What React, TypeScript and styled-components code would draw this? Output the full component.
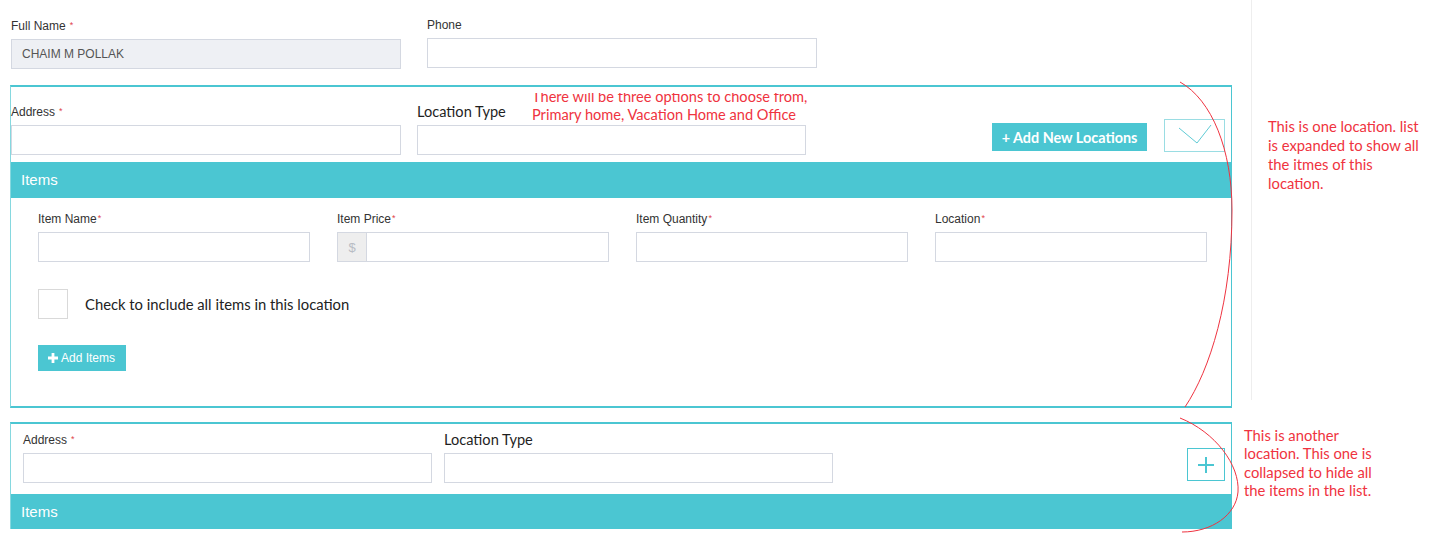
import React from "react";
import styled, { createGlobalStyle } from "styled-components";

const TEAL = "#4bc6d2";
const RED = "#ef3340";
const HUMANIST = `Lato, "Open Sans", "Liberation Sans", sans-serif`;

const GlobalStyle = createGlobalStyle`
  html, body { margin: 0; padding: 0; background: #ffffff; }
  body { font-family: "Liberation Sans", Arial, sans-serif; color: #333333; }
  * { box-sizing: border-box; }
`;

const Page = styled.div`
  position: relative;
  width: 1430px;
  height: 543px;
  overflow: hidden;
  padding-left: 10px;
`;

const UpperSection = styled.div`
  display: flex;
  align-items: flex-start;
`;

const LowerSection = styled.div`
  display: flex;
  align-items: flex-start;
  margin-top: 14px;
`;

const MainColumn = styled.div`
  width: 1222px;
  display: flex;
  flex-direction: column;
`;

const TopRow = styled.div`
  display: flex;
  gap: 26px;
  padding: 18px 0 0 1px;
`;

const Field = styled.div<{ $w: number }>`
  position: relative;
  width: ${(p) => p.$w}px;
  display: flex;
  flex-direction: column;
`;

const Label = styled.label`
  font-size: 12px;
  line-height: 14px;
  color: #333333;
  margin-bottom: 6px;
  white-space: nowrap;
`;

const HumanistLabel = styled.label`
  font-family: ${HUMANIST};
  font-size: 14.6px;
  line-height: 17px;
  color: #1f1f1f;
  margin-bottom: 5px;
  white-space: nowrap;
`;

const Req = styled.span<{ $tight?: boolean }>`
  color: #e0434c;
  font-size: 9px;
  margin-left: ${(p) => (p.$tight ? 1 : 4)}px;
  vertical-align: 2px;
`;

const TextInput = styled.input<{ $filled?: boolean }>`
  width: 100%;
  height: 30px;
  border: 1px solid #d4d8e1;
  background: ${(p) => (p.$filled ? "#eef0f4" : "#ffffff")};
  padding: 0 10px;
  font-family: "Liberation Sans", Arial, sans-serif;
  font-size: 12px;
  color: #555555;
  outline: none;
`;

const InputGroup = styled.div`
  display: flex;
  height: 30px;
`;

const Addon = styled.span`
  width: 29px;
  flex: none;
  display: flex;
  align-items: center;
  justify-content: center;
  background: #eeeeee;
  border: 1px solid #d4d8e1;
  border-right: none;
  color: #b8bcc4;
  font-size: 13px;
`;

const LocationCard = styled.section<{ $expanded: boolean; $gapTop: number }>`
  margin-top: ${(p) => p.$gapTop}px;
  width: 1222px;
  border-top: 2px solid ${TEAL};
  border-left: 1px solid #86d8df;
  border-right: 1px solid ${TEAL};
  border-bottom: ${(p) => (p.$expanded ? `2px solid ${TEAL}` : "none")};
`;

const CardHeader = styled.div<{ $pad: string; $gap: number }>`
  display: flex;
  align-items: flex-end;
  gap: ${(p) => p.$gap}px;
  padding: ${(p) => p.$pad};
`;

const Tools = styled.div`
  margin-left: auto;
  display: flex;
  align-items: flex-end;
  gap: 17px;
`;

const AddLocationButton = styled.button`
  width: 155px;
  height: 28px;
  margin-bottom: 4px;
  border: none;
  background: ${TEAL};
  color: #ffffff;
  font-family: ${HUMANIST};
  font-weight: 700;
  font-size: 14.4px;
  padding: 0;
`;

const ToggleBox = styled.button<{ $w: number; $light?: boolean }>`
  width: ${(p) => p.$w}px;
  height: 33px;
  margin-bottom: ${(p) => (p.$light ? 3 : 2)}px;
  padding: 0;
  border: 1px solid ${(p) => (p.$light ? "#9adde3" : TEAL)};
  background: #ffffff;
  display: flex;
  align-items: center;
  justify-content: center;
`;

const ItemsBar = styled.div<{ $h: number }>`
  height: ${(p) => p.$h}px;
  line-height: ${(p) => p.$h}px;
  background: ${TEAL};
  color: #ffffff;
  font-size: 15px;
  padding-left: 10px;
`;

const ItemsBody = styled.div`
  padding: 13px 24px 35px 27px;
  display: flex;
  flex-direction: column;
  align-items: flex-start;
`;

const ItemGrid = styled.div`
  display: grid;
  grid-template-columns: repeat(4, 272px);
  column-gap: 27px;
`;

const CheckRow = styled.label`
  margin-top: 27px;
  display: flex;
  align-items: center;
  gap: 17px;
`;

const CheckBox = styled.span`
  width: 30px;
  height: 30px;
  border: 1px solid #d9d9d9;
  background: #ffffff;
`;

const CheckText = styled.span`
  font-family: ${HUMANIST};
  font-size: 14.8px;
  color: #222222;
`;

const AddItemsButton = styled.button`
  margin-top: 26px;
  height: 26px;
  padding: 0 11px 0 10px;
  border: none;
  background: ${TEAL};
  color: #ffffff;
  font-family: "Liberation Sans", Arial, sans-serif;
  font-size: 12px;
  display: flex;
  align-items: center;
  gap: 3px;
`;

const SideRail = styled.div`
  margin-left: 19px;
  height: 400px;
  border-left: 1px solid #eeeeee;
  padding: 117px 0 0 16px;
`;

const Note = styled.p<{ $lh: number }>`
  margin: 0;
  font-family: ${HUMANIST};
  font-size: 14.8px;
  line-height: ${(p) => p.$lh}px;
  color: ${RED};
  white-space: nowrap;
`;

const SideNote = styled.div`
  margin: 4px 0 0 12px;
`;

const OptionsNoteClip = styled.div`
  position: absolute;
  left: 115px;
  top: -10px;
  height: 31px;
  overflow: hidden;
`;

const OptionsNoteText = styled(Note)`
  margin-top: -5px;
  font-size: 14.6px;
`;

const Curves = styled.svg`
  position: absolute;
  left: 0;
  top: 0;
  pointer-events: none;
`;

const ChevronIcon = () => (
  <svg width="59" height="31" viewBox="0 0 59 31">
    <polyline points="14,8 32,23 46,5" fill="none" stroke="#5fcbd5" strokeWidth="1" />
  </svg>
);

const PlusIcon = () => (
  <svg width="20" height="20" viewBox="0 0 20 20">
    <line x1="10" y1="2" x2="10" y2="18" stroke={TEAL} strokeWidth="2" />
    <line x1="2" y1="10" x2="18" y2="10" stroke={TEAL} strokeWidth="2" />
  </svg>
);

const BoldPlus = () => (
  <svg width="10" height="10" viewBox="0 0 10 10">
    <path d="M3.6 0h2.8v3.6H10v2.8H6.4V10H3.6V6.4H0V3.6h3.6z" fill="#ffffff" />
  </svg>
);

const itemFields = ["Item Name", "Item Price", "Item Quantity", "Location"];

export default function App() {
  return (
    <>
      <GlobalStyle />
      <Page>
        <UpperSection>
          <MainColumn>
            <TopRow>
              <Field $w={390}>
                <Label>
                  Full Name<Req>*</Req>
                </Label>
                <TextInput $filled readOnly value="CHAIM M POLLAK" />
              </Field>
              <Field $w={390}>
                <Label>Phone</Label>
                <TextInput />
              </Field>
            </TopRow>

            <LocationCard $expanded $gapTop={16}>
              <CardHeader $pad="16px 6px 7px 0" $gap={16}>
                <Field $w={390}>
                  <Label>
                    Address<Req>*</Req>
                  </Label>
                  <TextInput />
                </Field>
                <Field $w={389}>
                  <HumanistLabel>Location Type</HumanistLabel>
                  <TextInput />
                  <OptionsNoteClip>
                    <OptionsNoteText $lh={18}>
                      There will be three options to choose from,
                      <br />
                      Primary home, Vacation Home and Office
                    </OptionsNoteText>
                  </OptionsNoteClip>
                </Field>
                <Tools>
                  <AddLocationButton>+ Add New Locations</AddLocationButton>
                  <ToggleBox $w={61} $light>
                    <ChevronIcon />
                  </ToggleBox>
                </Tools>
              </CardHeader>
              <ItemsBar $h={36}>Items</ItemsBar>
              <ItemsBody>
                <ItemGrid>
                  {itemFields.map((name) => (
                    <Field $w={272} key={name}>
                      <Label>
                        {name}
                        <Req $tight>*</Req>
                      </Label>
                      {name === "Item Price" ? (
                        <InputGroup>
                          <Addon>$</Addon>
                          <TextInput />
                        </InputGroup>
                      ) : (
                        <TextInput />
                      )}
                    </Field>
                  ))}
                </ItemGrid>
                <CheckRow>
                  <CheckBox />
                  <CheckText>Check to include all items in this location</CheckText>
                </CheckRow>
                <AddItemsButton>
                  <BoldPlus />
                  Add Items
                </AddItemsButton>
              </ItemsBody>
            </LocationCard>
          </MainColumn>
          <SideRail>
            <Note $lh={19}>
              This is one location. list
              <br />
              is expanded to show all
              <br />
              the itmes of this
              <br />
              location.
            </Note>
          </SideRail>
        </UpperSection>

        <LowerSection>
          <LocationCard $expanded={false} $gapTop={0}>
            <CardHeader $pad="7px 6px 11px 12px" $gap={12}>
              <Field $w={409}>
                <Label>
                  Address<Req>*</Req>
                </Label>
                <TextInput />
              </Field>
              <Field $w={389}>
                <HumanistLabel>Location Type</HumanistLabel>
                <TextInput />
              </Field>
              <Tools>
                <ToggleBox $w={38}>
                  <PlusIcon />
                </ToggleBox>
              </Tools>
            </CardHeader>
            <ItemsBar $h={35}>Items</ItemsBar>
          </LocationCard>
          <SideNote>
            <Note $lh={18.3}>
              This is another
              <br />
              location. This one is
              <br />
              collapsed to hide all
              <br />
              the items in the list.
            </Note>
          </SideNote>
        </LowerSection>

        <Curves width="1430" height="543" viewBox="0 0 1430 543">
          <path
            d="M1180,82 C1212,100 1232,150 1232,210 C1232,300 1210,370 1185,407"
            fill="none"
            stroke={RED}
            strokeWidth="1"
          />
          <path
            d="M1180,418 C1215,432 1240,465 1238,492 C1236,515 1212,532 1182,532"
            fill="none"
            stroke={RED}
            strokeWidth="1"
          />
        </Curves>
      </Page>
    </>
  );
}
